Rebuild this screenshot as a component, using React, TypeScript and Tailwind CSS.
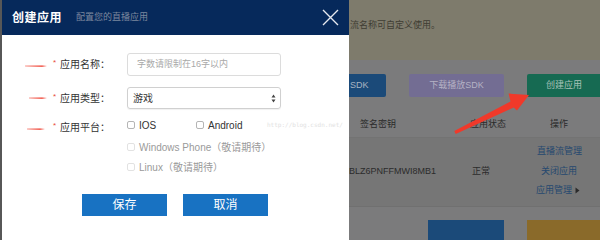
import React from 'react';

const font = { fontFamily: '"Liberation Sans", "Noto Sans CJK SC", sans-serif' };

function Checkbox({ disabled }: { disabled?: boolean }) {
  return (
    <span
      className={
        'inline-block w-[8px] h-[8px] rounded-[2px] border bg-white ' +
        (disabled ? 'border-[#e2e2e2]' : 'border-[#b5b5b5]')
      }
    />
  );
}

function SmallArrow({ top, left, width }: { top: number; left: number; width: number }) {
  return (
    <svg className="absolute" style={{ top: top - 3, left }} width={width} height="6" viewBox={`0 0 ${width} 6`}>
      <polygon points={`0,2.7 ${width - 5},2.4 ${width},3 ${width - 5},3.7 0,3.3`} fill="#ee3424" />
    </svg>
  );
}

function FormRow({ label, children, className }: { label: string; children: React.ReactNode; className?: string }) {
  return (
    <div className={'flex items-center ' + (className ?? '')}>
      <div className="w-[125px] pl-[51px] flex items-center text-[10px] text-[#333]">
        <span className="text-[#e8483a] text-[8px] w-[7px] -mt-[3px]">*</span>
        <span>{label}</span>
      </div>
      {children}
    </div>
  );
}

export default function App() {
  return (
    <div className="relative w-[600px] h-[240px] overflow-hidden flex bg-[#5a5a5a]" style={font}>
      {/* dimmed strip left of the modal */}
      <div className="w-[2px] bg-[#575757]" />

      {/* modal */}
      <div className="w-[347px] h-full bg-white flex flex-col">
        <div className="h-[35px] bg-[#06295b] flex items-center pl-[10px] pr-[10px]">
          <span className="text-white text-[12px] font-bold tracking-[0.5px]">创建应用</span>
          <span className="text-[#7d889e] text-[9px] ml-[14px]">配置您的直播应用</span>
          <svg className="ml-auto" width="17" height="17" viewBox="0 0 17 17">
            <path d="M1 1 L16 16 M16 1 L1 16" stroke="#e6e9ef" strokeWidth="1.4" />
          </svg>
        </div>

        <FormRow label="应用名称：" className="mt-[18px] h-[23px]">
          <div className="w-[154px] h-[23px] border border-[#dcdcdc] rounded-[3px] flex items-center pl-[9px] text-[9px] text-[#a9a9a9]">
            字数请限制在16字以内
          </div>
        </FormRow>

        <FormRow label="应用类型：" className="mt-[11px] h-[22px]">
          <div className="w-[154px] h-[22px] border border-[#d0d0d0] rounded-[3px] flex items-center pl-[5px] pr-[4px] text-[10px] text-[#333] shadow-[0_1px_1px_rgba(0,0,0,0.06)]">
            游戏
            <svg className="ml-auto" width="5" height="9" viewBox="0 0 5 9">
              <path d="M2.5 0.5 L4.5 3.5 L0.5 3.5 Z M2.5 8.5 L4.5 5.5 L0.5 5.5 Z" fill="#444" />
            </svg>
          </div>
        </FormRow>

        <FormRow label="应用平台：" className="mt-[11px] h-[14px]">
          <div className="flex items-center text-[10px] text-[#333] -mt-[4px]">
            <div className="w-[69px] flex items-center gap-[4px]">
              <Checkbox />
              <span>IOS</span>
            </div>
            <div className="flex items-center gap-[4px]">
              <Checkbox />
              <span>Android</span>
            </div>
          </div>
        </FormRow>

        <div className="mt-[6px] h-[14px] pl-[125px] flex items-center gap-[4px] text-[10px] text-[#9a9a9a]">
          <Checkbox disabled />
          <span>Windows Phone（敬请期待）</span>
        </div>
        <div className="mt-[6px] h-[14px] pl-[125px] flex items-center gap-[4px] text-[10px] text-[#9a9a9a]">
          <Checkbox disabled />
          <span>Linux（敬请期待）</span>
        </div>

        <div className="mt-[20px] pl-[80px] flex gap-[16px]">
          <button className="w-[85px] h-[22px] bg-[#1872c2] text-white text-[12px]">保存</button>
          <button className="w-[85px] h-[22px] bg-[#1872c2] text-white text-[12px]">取消</button>
        </div>
      </div>

      {/* dimmed page behind the modal */}
      <div className="flex-1 h-full overflow-hidden flex flex-col bg-[#7b7b7c] text-[9px]">
        <div className="h-[63px] bg-[#7e7b6c] pt-[19px] pl-[1px] text-[#3f3d33] whitespace-nowrap">
          流名称可自定义使用。
        </div>

        <div className="h-[55px] pt-[14px] flex gap-[23px] whitespace-nowrap">
          <div className="w-[37px] h-[23px] shrink-0 bg-[#1b4a79] rounded-r-[2px] flex items-center pl-[1px] text-[#aab4c2]">
            SDK
          </div>
          <div className="w-[95px] h-[23px] shrink-0 bg-[#736d93] rounded-[2px] flex items-center justify-center text-[#b5b2c4]">
            下载播放SDK
          </div>
          <div className="w-[74px] h-[23px] shrink-0 bg-[#166a52] rounded-l-[2px] flex items-center justify-center text-[#a9c3b9]">
            创建应用
          </div>
        </div>

        <div className="h-[27px] flex items-center text-[#2a2a2a] border-b border-[#737373] whitespace-nowrap">
          <span className="ml-[11px]">签名密钥</span>
          <span className="ml-[74px]">应用状态</span>
          <span className="ml-[44px]">操作</span>
        </div>

        <div className="h-[74px] bg-[#767676] border-b border-[#707070] flex items-center text-[#2b2b2b] whitespace-nowrap">
          <span className="w-[124px]">BLZ6PNFFMWI8MB1</span>
          <span className="-ml-[1px]">正常</span>
          <div className="ml-[47px] flex flex-col items-start gap-[6px] text-[#25486f] pb-[1px]">
            <span>直播流管理</span>
            <span className="ml-[4px]">关闭应用</span>
            <span className="-ml-[1px] flex items-center gap-[3px]">
              应用管理
              <svg width="5" height="7" viewBox="0 0 5 7">
                <path d="M0.5 0.5 L4.5 3.5 L0.5 6.5 Z" fill="#2a2a2a" />
              </svg>
            </span>
          </div>
        </div>

        <div className="pt-[13px] flex gap-[23px] ml-[79px]">
          <div className="w-[76px] h-[20px] shrink-0 bg-[#1b4a79]" />
          <div className="w-[73px] h-[20px] shrink-0 bg-[#8a6a2a]" />
        </div>
      </div>

      {/* watermark */}
      <span className="absolute left-[267px] top-[120px] text-[6px] text-[#e2e2e2]" style={{ fontFamily: '"DejaVu Sans Mono", monospace' }}>
        http://blog.csdn.net/
      </span>

      {/* annotation arrows */}
      <SmallArrow top={66} left={25} width={22} />
      <SmallArrow top={98} left={29} width={18} />
      <SmallArrow top={129} left={27} width={18} />

      <svg className="absolute left-0 top-0 pointer-events-none" width="600" height="240" viewBox="0 0 600 240">
        <polygon
          points="454.3,131.1 510.5,101.4 508.6,93.6 529,95 517.0,110.4 513.7,107.6 455.7,133.9"
          fill="#f0392a"
        />
      </svg>
    </div>
  );
}
